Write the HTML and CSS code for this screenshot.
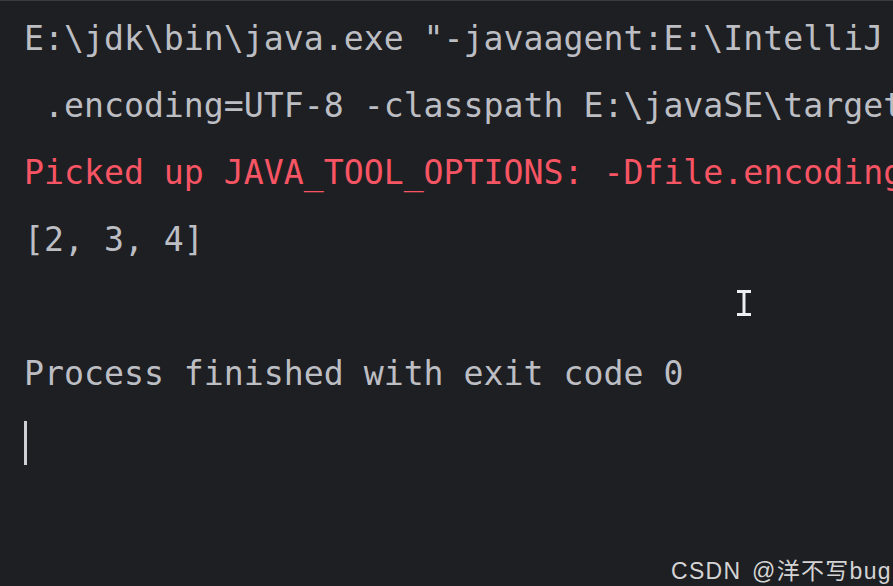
FILE: index.html
```html
<!DOCTYPE html>
<html>
<head>
<meta charset="utf-8">
<link rel="stylesheet" href="styles.css">
</head>
<body>
<div class="console">
  <div class="line">E:\jdk\bin\java.exe "-javaagent:E:\IntelliJ IDEA\lib\idea_rt.jar" -Dfile</div>
  <div class="line"> .encoding=UTF-8 -classpath E:\javaSE\target\classes Main</div>
  <div class="line err">Picked up JAVA_TOOL_OPTIONS: -Dfile.encoding=UTF-8</div>
  <div class="line">[2, 3, 4]</div>
  <div class="line"> </div>
  <div class="line">Process finished with exit code 0</div>
  <div class="line"><span class="caret"></span></div>
</div>
<svg class="ibeam" width="16" height="26" viewBox="0 0 16 26">
  <path d="M1 1.5H15M1 24.5H15M8 1.5V24.5" stroke="#eceef0" stroke-width="3" fill="none"/>
</svg>
<div class="watermark">CSDN @洋不写bug</div>
</body>
</html>
```
FILE: styles.css
```css
html, body {
  margin: 0;
  padding: 0;
  background: #1e1f22;
  width: 893px;
  height: 586px;
  overflow: hidden;
}
body {
  position: relative;
  border-top: 1px solid #393b40;
  box-sizing: border-box;
}
.console {
  padding: 4px 0 0 24px;
  font-family: "DejaVu Sans Mono", "Liberation Mono", monospace;
  font-size: 33.2px;
  line-height: 67px;
  color: #bcbec4;
}
.line {
  white-space: pre;
  overflow: hidden;
  height: 67px;
}
.err {
  color: #f75464;
}
.caret {
  display: inline-block;
  width: 3px;
  height: 44px;
  background: #ced0d6;
  vertical-align: middle;
}
.ibeam {
  position: absolute;
  left: 736px;
  top: 289px;
}
.watermark {
  position: absolute;
  left: 671px;
  top: 557px;
  line-height: 26px;
  font-family: "Liberation Sans", "Noto Sans CJK SC", sans-serif;
  font-size: 23px;
  letter-spacing: 1.3px;
  word-spacing: 3px;
  color: #d4d4d4;
  white-space: nowrap;
}
```
